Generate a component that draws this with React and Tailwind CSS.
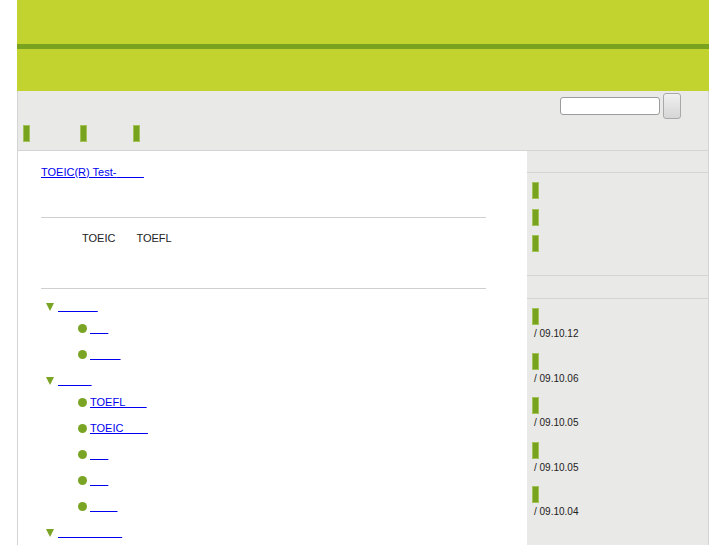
import React from "react";

const sp = (n) => "\u00a0".repeat(n);

function Bar({ className = "" }) {
  return <div className={"w-[7px] h-[17px] bg-[#78a31e] border border-[#a3c25a] " + className} />;
}

function Head({ label }) {
  return (
    <div className="h-[26px] flex items-center">
      <div className="ml-[5px] w-0 h-0 border-l-[4px] border-r-[4px] border-t-[8px] border-l-transparent border-r-transparent border-t-[#7aa424] mt-[2px]" />
      <a href="#" className="ml-[4px] text-[#0000ee] underline leading-[13px]">{label}</a>
    </div>
  );
}

function Child({ label }) {
  return (
    <div className="h-[26px] flex items-center">
      <div className="ml-[37px] w-[9px] h-[9px] rounded-full bg-[#7aa424]" />
      <a href="#" className="ml-[3px] text-[#0000ee] underline leading-[13px]">{label}</a>
    </div>
  );
}

export default function App() {
  const dates = ["09.10.12", "09.10.06", "09.10.05", "09.10.05", "09.10.04"];
  return (
    <div className="min-h-[545px] bg-white text-[11px] text-[#222]" style={{ fontFamily: '"Liberation Sans", Arial, sans-serif' }}>
      <div className="ml-[17px] w-[692px]">
        {/* header */}
        <div className="h-[91px] bg-[#c2d22e] pt-[44px]">
          <div className="h-[5px] bg-[#79a21f]" />
        </div>
        {/* nav */}
        <div className="h-[60px] bg-[#e9e9e7] border-l border-r border-b border-[#d4d4d4] pt-[2px]">
          <div className="flex justify-end items-center pr-[27px]">
            <input className="w-[100px] h-[18px] border border-[#9c9c9c] rounded-[3px] bg-white" />
            <div className="ml-[3px] w-[18px] h-[26px] border border-[#a9a9a9] rounded-[3px] bg-gradient-to-b from-[#f0f0f0] to-[#d6d6d6]" />
          </div>
          <div className="flex mt-[6px] pl-[5px]">
            <Bar />
            <Bar className="ml-[50px]" />
            <Bar className="ml-[46px]" />
          </div>
        </div>
        {/* main */}
        <div className="flex border-l border-[#d4d4d4]">
          <div className="w-[509px] bg-white pl-[23px] pr-[41px] pt-[15px] pb-[10px]">
            <div className="h-[13px] leading-[13px]">
              <a href="#" className="text-[#0000ee] underline">TOEIC(R) Test-{sp(9)}</a>
            </div>
            <div className="mt-[38px] border-t border-[#cfcfcf]" />
            <div className="mt-[14px] h-[13px] leading-[13px] pl-[41px] text-[#222]">
              TOEIC<span className="ml-[21px]">TOEFL</span>
            </div>
            <div className="mt-[43px] border-t border-[#cfcfcf]" />
            <div className="mt-[4px]">
              <Head label={sp(13)} />
              <div className="-mt-[4px]">
                <Child label={sp(6)} />
                <Child label={sp(10)} />
              </div>
              <Head label={sp(11)} />
              <div className="-mt-[4px]">
                <Child label={"TOEFL" + sp(7)} />
                <Child label={"TOEIC" + sp(8)} />
                <Child label={sp(6)} />
                <Child label={sp(6)} />
                <Child label={sp(9)} />
              </div>
              <Head label={sp(21)} />
            </div>
          </div>
          <div className="w-[182px] bg-[#e9e9e7] border-r border-[#d4d4d4]">
            <div className="h-[22px] border-b border-[#d4d4d4]" />
            <div className="pt-[9px] pb-[23px] pl-[5px] flex flex-col gap-[9.5px] border-b border-[#d4d4d4]">
              <Bar />
              <Bar />
              <Bar />
            </div>
            <div className="h-[23px] border-b border-[#d4d4d4]" />
            <div className="pt-[9px] pl-[5px] flex flex-col gap-[12.5px] pb-[30px]">
              {dates.map((d, i) => (
                <div key={i}>
                  <Bar />
                  <div className="mt-[3px] h-[12px] leading-[12px] text-[10px] text-[#222] pl-[2px]">/ {d}</div>
                </div>
              ))}
            </div>
          </div>
        </div>
      </div>
    </div>
  );
}
